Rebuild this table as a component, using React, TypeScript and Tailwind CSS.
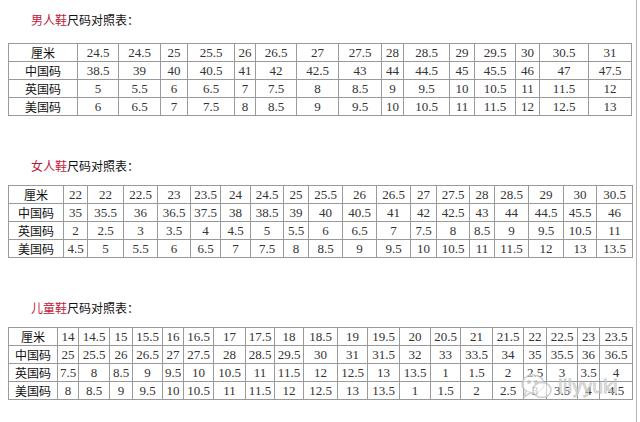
const labels = ["厘米", "中国码", "英国码", "美国码"];

const men = [
  ["24.5", "24.5", "25", "25.5", "26", "26.5", "27", "27.5", "28", "28.5", "29", "29.5", "30", "30.5", "31"],
  ["38.5", "39", "40", "40.5", "41", "42", "42.5", "43", "44", "44.5", "45", "45.5", "46", "47", "47.5"],
  ["5", "5.5", "6", "6.5", "7", "7.5", "8", "8.5", "9", "9.5", "10", "10.5", "11", "11.5", "12"],
  ["6", "6.5", "7", "7.5", "8", "8.5", "9", "9.5", "10", "10.5", "11", "11.5", "12", "12.5", "13"],
];

const women = [
  ["22", "22", "22.5", "23", "23.5", "24", "24.5", "25", "25.5", "26", "26.5", "27", "27.5", "28", "28.5", "29", "30", "30.5"],
  ["35", "35.5", "36", "36.5", "37.5", "38", "38.5", "39", "40", "40.5", "41", "42", "42.5", "43", "44", "44.5", "45.5", "46"],
  ["2", "2.5", "3", "3.5", "4", "4.5", "5", "5.5", "6", "6.5", "7", "7.5", "8", "8.5", "9", "9.5", "10.5", "11"],
  ["4.5", "5", "5.5", "6", "6.5", "7", "7.5", "8", "8.5", "9", "9.5", "10", "10.5", "11", "11.5", "12", "13", "13.5"],
];

const kids = [
  ["14", "14.5", "15", "15.5", "16", "16.5", "17", "17.5", "18", "18.5", "19", "19.5", "20", "20.5", "21", "21.5", "22", "22.5", "23", "23.5"],
  ["25", "25.5", "26", "26.5", "27", "27.5", "28", "28.5", "29.5", "30", "31", "31.5", "32", "33", "33.5", "34", "35", "35.5", "36", "36.5"],
  ["7.5", "8", "8.5", "9", "9.5", "10", "10.5", "11", "11.5", "12", "12.5", "13", "13.5", "1", "1.5", "2", "2.5", "3", "3.5", "4"],
  ["8", "8.5", "9", "9.5", "10", "10.5", "11", "11.5", "12", "12.5", "13", "13.5", "1", "1.5", "2", "2.5", "3", "3.5", "4", "4.5"],
];

const cjk = "font-[family-name:Noto_Sans_CJK_SC,Noto_Sans,sans-serif]";

function Title({ red }: { red: string }) {
  return (
    <div className={`ml-[31px] h-4 text-[12px] leading-4 text-[#111] ${cjk}`}>
      <span className="text-[#c0183a]">{red}</span>尺码对照表：
    </div>
  );
}

function SizeTable({ cols, rows }: { cols: string; rows: string[][] }) {
  return (
    <div className={`ml-2 grid w-fit border-l border-t border-[#9a9a9a] ${cols}`}>
      {rows.map((row, r) => [
        <div
          key={`l${r}`}
          className={`flex h-[18px] items-center justify-center border-r border-b border-[#9a9a9a] text-[12px] text-[#111] ${cjk}`}
        >
          {labels[r]}
        </div>,
        ...row.map((v, c) => (
          <div
            key={`${r}-${c}`}
            className="flex h-[18px] items-center justify-center border-r border-b border-[#9a9a9a] font-[family-name:Liberation_Serif,Times_New_Roman,serif] text-[13px] text-[#333]"
          >
            {v}
          </div>
        )),
      ])}
    </div>
  );
}

export default function App() {
  return (
    <main className="relative h-[422px] w-[640px] overflow-hidden bg-white">
      <div className="flex h-full w-[637px] flex-col border-r border-[#b4b4b4] pt-3">
        <Title red="男人鞋" />
        <div className="mt-[15px]">
          <SizeTable
            cols="grid-cols-[69px_41px_42px_27px_47px_21px_41px_42px_43px_22px_46px_25px_41px_24px_49px_43px]"
            rows={men}
          />
        </div>
        <div className="mt-[42px]">
          <Title red="女人鞋" />
        </div>
        <div className="mt-[11px]">
          <SizeTable
            cols="grid-cols-[55px_24px_36px_34px_33px_30px_30px_33px_25px_34px_34px_34px_26px_33px_25px_34px_35px_33px_36px]"
            rows={women}
          />
        </div>
        <div className="mt-[42px]">
          <Title red="儿童鞋" />
        </div>
        <div className="mt-[11px]">
          <SizeTable
            cols="grid-cols-[49px_21px_31px_23px_30px_21px_30px_32px_29px_29px_34px_30px_32px_31px_30px_32px_31px_23px_31px_22px_33px]"
            rows={kids}
          />
        </div>
      </div>

      {/* watermark */}
      <div className="pointer-events-none absolute left-[520px] top-[372px] flex items-center gap-1 opacity-80">
        <svg width="34" height="30" viewBox="0 0 34 30" fill="none" stroke="#c4c4c4" strokeWidth="1.6">
          <ellipse cx="13" cy="12" rx="11" ry="9" fill="rgba(255,255,255,0.7)" />
          <path d="M6 19 L4 25 L11 20.5" fill="rgba(255,255,255,0.7)" />
          <ellipse cx="22" cy="18" rx="9" ry="7.5" fill="rgba(255,255,255,0.7)" />
          <circle cx="9" cy="10" r="1.2" fill="#c4c4c4" />
          <circle cx="16" cy="10" r="1.2" fill="#c4c4c4" />
        </svg>
        <span className="font-[family-name:DejaVu_Sans,sans-serif] text-[17px] leading-none text-white/60 [-webkit-text-stroke:1px_#c0c0c0]">
          lilyyuki
        </span>
      </div>
    </main>
  );
}
